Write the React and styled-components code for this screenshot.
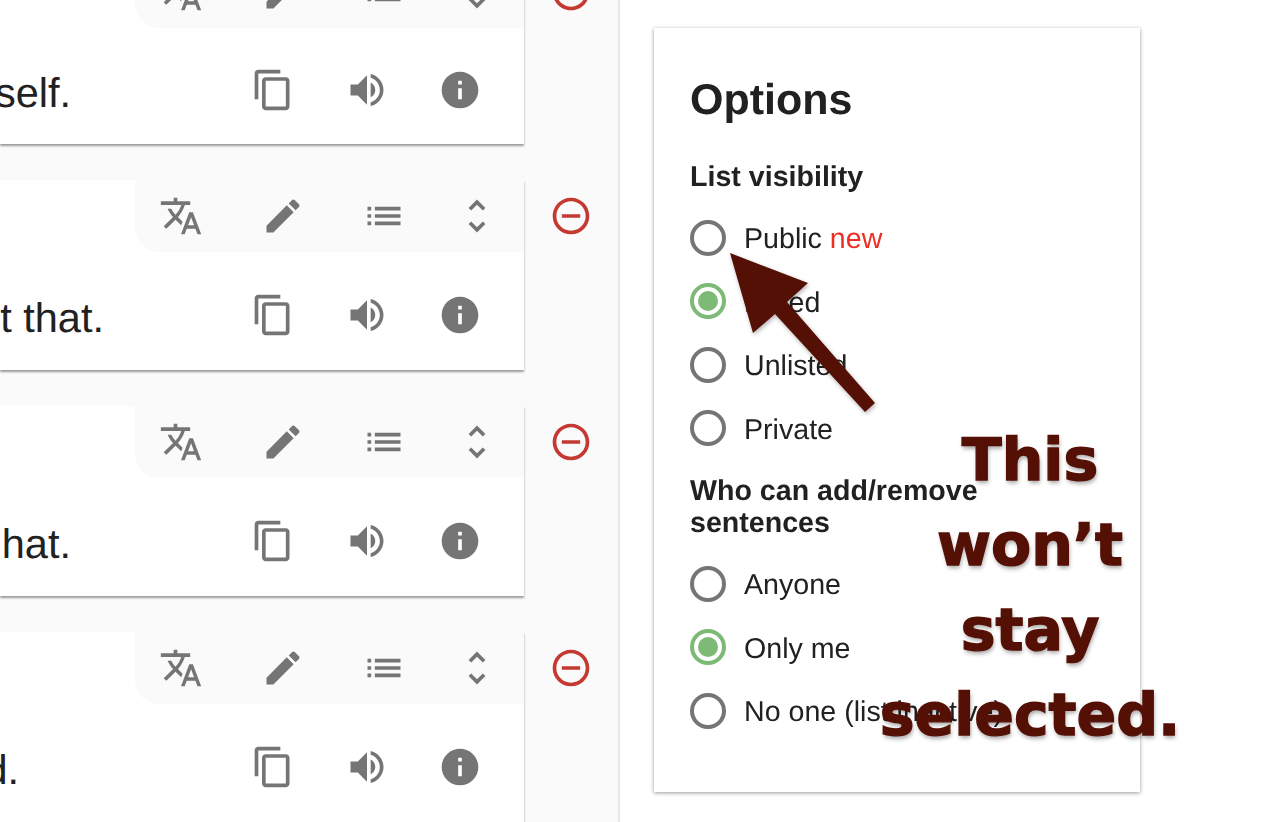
import React from 'react';
import styled, { createGlobalStyle } from 'styled-components';

const GlobalStyle = createGlobalStyle`
  html, body { margin: 0; padding: 0; background: #fff; }
  body {
    font-family: "Liberation Sans", Arial, sans-serif;
    color: #212121;
    text-rendering: geometricPrecision;
  }
`;

const Page = styled.div`
  position: relative;
  display: flex;
  width: 1288px;
  height: 822px;
  overflow: hidden;
  filter: blur(0.4px);
`;

const ListColumn = styled.div`
  width: 618px;
  height: 822px;
  flex: none;
  background: #fafafa;
  border-right: 2px solid #e8e8e8;
  overflow: hidden;
`;

const SentenceList = styled.div`
  display: flex;
  flex-direction: column;
  gap: 36px;
  margin-top: -44px;
`;

const SentenceRow = styled.div`
  display: flex;
  align-items: flex-start;
  gap: 25px;
`;

const Card = styled.div`
  display: flex;
  flex-direction: column;
  width: 524px;
  height: ${p => p.$height}px;
  flex: none;
  background: #fff;
  box-shadow: 0 2px 2px rgba(0, 0, 0, 0.38);
`;

const CardTabs = styled.div`
  display: flex;
  align-items: center;
  align-self: flex-end;
  box-sizing: border-box;
  width: 389px;
  height: 72px;
  padding-left: 24px;
  gap: 57.5px;
  background: #fafafa;
  border-bottom-left-radius: 24px;
`;

const CardBody = styled.div`
  flex: 1;
  display: flex;
  align-items: center;
  justify-content: space-between;
  padding: 8px 42px 0 0;
`;

const Sentence = styled.div`
  display: flex;
  justify-content: flex-end;
  width: ${p => p.$width}px;
  margin-top: 6px;
  overflow: hidden;
  white-space: nowrap;
  font-size: 41.5px;
  line-height: 50px;
  color: #212121;
`;

const CardActions = styled.div`
  display: flex;
  gap: 49.5px;
`;

const Glyph = styled.svg`
  display: block;
  flex: none;
  width: 44px;
  height: 44px;
  fill: ${p => p.$color || '#757575'};
  margin-left: ${p => p.$shift || 0}px;
`;

const RemoveGlyph = styled(Glyph)`
  margin-top: 14px;
`;

const OptionsColumn = styled.div`
  padding: 28px 0 0 34px;
`;

const Panel = styled.div`
  box-sizing: border-box;
  width: 486px;
  height: 764px;
  padding: 47px 36px 0;
  background: #fff;
  box-shadow: 0 1px 4px rgba(0, 0, 0, 0.4);
`;

const Title = styled.h1`
  margin: 0;
  font-size: 43px;
  line-height: 50px;
  font-weight: 700;
`;

const GroupTitle = styled.h2`
  margin: ${p => p.$top}px 0 ${p => p.$bottom}px;
  font-size: 28.6px;
  line-height: 32px;
  font-weight: 700;
`;

const RadioRow = styled.div`
  display: flex;
  align-items: center;
  gap: 18px;
  height: 63.5px;
  font-size: 28.6px;
`;

const RadioCircle = styled.span`
  display: flex;
  align-items: center;
  justify-content: center;
  box-sizing: border-box;
  width: 36px;
  height: 36px;
  flex: none;
  border: 4px solid ${p => (p.$checked ? '#7dba75' : '#757575')};
  border-radius: 50%;
  background: #fff;
  &::after {
    content: '';
    display: ${p => (p.$checked ? 'block' : 'none')};
    width: 20px;
    height: 20px;
    border-radius: 50%;
    background: #7dba75;
  }
`;

const RadioLabel = styled.span`
  position: relative;
  top: 2px;
`;

const NewTag = styled.span`
  color: #ee2d24;
`;

const ArrowOverlay = styled.svg`
  position: absolute;
  left: 0;
  top: 0;
  width: 1288px;
  height: 822px;
  pointer-events: none;
  filter: drop-shadow(1px 2px 2px rgba(0, 0, 0, 0.3));
`;

const Annotation = styled.div`
  position: absolute;
  left: 830px;
  top: 418px;
  width: 400px;
  text-align: center;
  font-family: "DejaVu Sans", sans-serif;
  font-weight: 700;
  font-size: 58.5px;
  line-height: 85px;
  color: #551006;
  -webkit-text-stroke: 1.4px #551006;
  text-shadow: 1px 3px 4px rgba(0, 0, 0, 0.35);
`;

const ICONS = {
  translate: 'M12.87 15.07l-2.54-2.51.03-.03c1.74-1.94 2.98-4.17 3.71-6.53H17V4h-7V2H8v2H1v1.99h11.17C11.5 7.92 10.44 9.75 9 11.35 8.07 10.32 7.3 9.19 6.69 8h-2c.73 1.63 1.73 3.17 2.98 4.56l-5.09 5.02L4 19l5-5 3.11 3.11.76-2.04zM18.5 10h-2L12 22h2l1.12-3h4.75L21 22h2l-4.5-12zm-2.62 7l1.62-4.33L19.12 17h-3.24z',
  edit: 'M3 17.25V21h3.75L17.81 9.94l-3.75-3.75L3 17.25zM20.71 7.04c.39-.39.39-1.02 0-1.41l-2.34-2.34c-.39-.39-1.02-.39-1.41 0l-1.83 1.83 3.75 3.75 1.83-1.83z',
  list: 'M3 13h2v-2H3v2zm0 4h2v-2H3v2zm0-8h2V7H3v2zm4 4h14v-2H7v2zm0 4h14v-2H7v2zM7 7v2h14V7H7z',
  unfold: 'M12 5.83L15.17 9l1.41-1.41L12 3 7.41 7.59 8.83 9 12 5.83zm0 12.34L8.83 15l-1.41 1.41L12 21l4.59-4.59L15.17 15 12 18.17z',
  copy: 'M16 1H4c-1.1 0-2 .9-2 2v14h2V3h12V1zm3 4H8c-1.1 0-2 .9-2 2v14c0 1.1.9 2 2 2h11c1.1 0 2-.9 2-2V7c0-1.1-.9-2-2-2zm0 16H8V7h11v14z',
  volume: 'M3 9v6h4l5 5V4L7 9H3zm13.5 3c0-1.77-1.02-3.29-2.5-4.03v8.05c1.48-.73 2.5-2.25 2.5-4.02zM14 3.23v2.06c2.89.86 5 3.54 5 6.71s-2.11 5.85-5 6.71v2.06c4.01-.91 7-4.49 7-8.77 0-4.28-2.99-7.86-7-8.77z',
  info: 'M12 2C6.48 2 2 6.48 2 12s4.48 10 10 10 10-4.48 10-10S17.52 2 12 2zm1 15h-2v-6h2v6zm0-8h-2V7h2v2z',
  remove: 'M7 11v2h10v-2H7zm5-9C6.48 2 2 6.48 2 12s4.48 10 10 10 10-4.48 10-10S17.52 2 12 2zm0 18c-4.41 0-8-3.59-8-8s3.59-8 8-8 8 3.59 8 8-3.59 8-8 8z',
};

const Icon = ({ name, as: Comp = Glyph, ...rest }) => (
  <Comp viewBox="0 0 24 24" {...rest}>
    <path d={ICONS[name]} />
  </Comp>
);

const sentences = [
  { text: 'self.', width: 71, height: 188 },
  { text: 't that.', width: 104, height: 190 },
  { text: 'hat.', width: 71, height: 190 },
  { text: 'd.', width: 19, height: 190 },
];

const visibility = [
  { label: 'Public', isNew: true },
  { label: 'Listed', checked: true },
  { label: 'Unlisted' },
  { label: 'Private' },
];

const editors = [
  { label: 'Anyone' },
  { label: 'Only me', checked: true },
  { label: 'No one (list inactive)' },
];

const Radio = ({ label, checked, isNew }) => (
  <RadioRow>
    <RadioCircle $checked={checked} />
    <RadioLabel>
      {label}
      {isNew && <NewTag> new</NewTag>}
    </RadioLabel>
  </RadioRow>
);

const App = () => (
  <Page>
    <GlobalStyle />
    <ListColumn>
      <SentenceList>
        {sentences.map(s => (
          <SentenceRow key={s.text}>
            <Card $height={s.height}>
              <CardTabs>
                <Icon name="translate" />
                <Icon name="edit" />
                <Icon name="list" />
                <Icon name="unfold" $shift={-8.5} />
              </CardTabs>
              <CardBody>
                <Sentence $width={s.width}>{s.text}</Sentence>
                <CardActions>
                  <Icon name="copy" />
                  <Icon name="volume" />
                  <Icon name="info" />
                </CardActions>
              </CardBody>
            </Card>
            <Icon name="remove" as={RemoveGlyph} $color="#c43a33" />
          </SentenceRow>
        ))}
      </SentenceList>
    </ListColumn>
    <OptionsColumn>
      <Panel>
        <Title>Options</Title>
        <GroupTitle $top={36} $bottom={13}>List visibility</GroupTitle>
        {visibility.map(o => <Radio key={o.label} {...o} />)}
        <GroupTitle $top={15} $bottom={13}>Who can add/remove sentences</GroupTitle>
        {editors.map(o => <Radio key={o.label} {...o} />)}
      </Panel>
    </OptionsColumn>
    <ArrowOverlay viewBox="0 0 1288 822">
      <polygon points="730,253 808,283 787,302 875,403 865,412 775,314 753,333" fill="#551006" />
    </ArrowOverlay>
    <Annotation>
      This<br />won’t<br />stay<br />selected.
    </Annotation>
  </Page>
);

export default App;
